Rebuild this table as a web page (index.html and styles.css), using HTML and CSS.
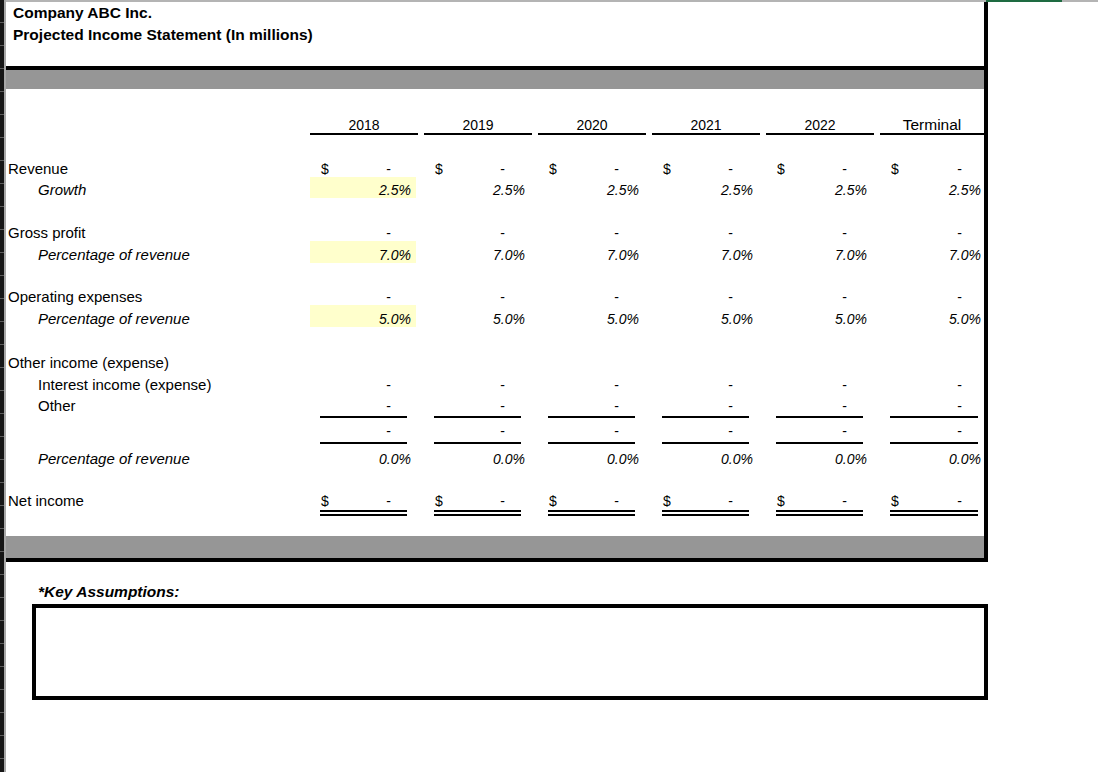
FILE: index.html
```html
<!DOCTYPE html>
<html>
<head>
<meta charset="utf-8">
<title>Projected Income Statement</title>
<link rel="stylesheet" href="styles.css">
</head>
<body>
<div class="screen">
  <div class="rowhead"></div>
  <div class="main">
    <div class="topline"><div class="tab-indicator"></div></div>
    <div class="frame">
      <div class="titles">
        <div class="title">Company ABC Inc.</div>
        <div class="title">Projected Income Statement (In millions)</div>
      </div>
      <div class="band band-top"></div>
      <div class="sheet">
        <div class="row h46 head">
          <div class="label"></div>
          <div class="yr">2018</div>
          <div class="yr">2019</div>
          <div class="yr">2020</div>
          <div class="yr">2021</div>
          <div class="yr">2022</div>
          <div class="yr last term">Terminal</div>
        </div>
        <div class="row h21"></div>
        <div class="row h21">
          <div class="label">Revenue</div>
          <div class="cell"><span class="amt"><span>$</span><span>-</span></span></div>
          <div class="cell"><span class="amt"><span>$</span><span>-</span></span></div>
          <div class="cell"><span class="amt"><span>$</span><span>-</span></span></div>
          <div class="cell"><span class="amt"><span>$</span><span>-</span></span></div>
          <div class="cell"><span class="amt"><span>$</span><span>-</span></span></div>
          <div class="cell last"><span class="amt"><span>$</span><span>-</span></span></div>
        </div>
        <div class="row h21">
          <div class="label sub it">Growth</div>
          <div class="cell pct hl">2.5%</div>
          <div class="cell pct">2.5%</div>
          <div class="cell pct">2.5%</div>
          <div class="cell pct">2.5%</div>
          <div class="cell pct">2.5%</div>
          <div class="cell pct last">2.5%</div>
        </div>
        <div class="row h22"></div>
        <div class="row h21">
          <div class="label">Gross profit</div>
          <div class="cell"><span class="amt end"><span>-</span></span></div>
          <div class="cell"><span class="amt end"><span>-</span></span></div>
          <div class="cell"><span class="amt end"><span>-</span></span></div>
          <div class="cell"><span class="amt end"><span>-</span></span></div>
          <div class="cell"><span class="amt end"><span>-</span></span></div>
          <div class="cell last"><span class="amt end"><span>-</span></span></div>
        </div>
        <div class="row h22">
          <div class="label sub it">Percentage of revenue</div>
          <div class="cell pct hl">7.0%</div>
          <div class="cell pct">7.0%</div>
          <div class="cell pct">7.0%</div>
          <div class="cell pct">7.0%</div>
          <div class="cell pct">7.0%</div>
          <div class="cell pct last">7.0%</div>
        </div>
        <div class="row h21"></div>
        <div class="row h21">
          <div class="label">Operating expenses</div>
          <div class="cell"><span class="amt end"><span>-</span></span></div>
          <div class="cell"><span class="amt end"><span>-</span></span></div>
          <div class="cell"><span class="amt end"><span>-</span></span></div>
          <div class="cell"><span class="amt end"><span>-</span></span></div>
          <div class="cell"><span class="amt end"><span>-</span></span></div>
          <div class="cell last"><span class="amt end"><span>-</span></span></div>
        </div>
        <div class="row h22">
          <div class="label sub it">Percentage of revenue</div>
          <div class="cell pct hl">5.0%</div>
          <div class="cell pct">5.0%</div>
          <div class="cell pct">5.0%</div>
          <div class="cell pct">5.0%</div>
          <div class="cell pct">5.0%</div>
          <div class="cell pct last">5.0%</div>
        </div>
        <div class="row h21"></div>
        <div class="row h23">
          <div class="label">Other income (expense)</div>
        </div>
        <div class="row h22">
          <div class="label sub">Interest income (expense)</div>
          <div class="cell"><span class="amt end"><span>-</span></span></div>
          <div class="cell"><span class="amt end"><span>-</span></span></div>
          <div class="cell"><span class="amt end"><span>-</span></span></div>
          <div class="cell"><span class="amt end"><span>-</span></span></div>
          <div class="cell"><span class="amt end"><span>-</span></span></div>
          <div class="cell last"><span class="amt end"><span>-</span></span></div>
        </div>
        <div class="row h25 single">
          <div class="label sub">Other</div>
          <div class="cell"><span class="amt end"><span>-</span></span></div>
          <div class="cell"><span class="amt end"><span>-</span></span></div>
          <div class="cell"><span class="amt end"><span>-</span></span></div>
          <div class="cell"><span class="amt end"><span>-</span></span></div>
          <div class="cell"><span class="amt end"><span>-</span></span></div>
          <div class="cell last"><span class="amt end"><span>-</span></span></div>
        </div>
        <div class="row h26 subtotal">
          <div class="label"></div>
          <div class="cell"><span class="amt end"><span>-</span></span></div>
          <div class="cell"><span class="amt end"><span>-</span></span></div>
          <div class="cell"><span class="amt end"><span>-</span></span></div>
          <div class="cell"><span class="amt end"><span>-</span></span></div>
          <div class="cell"><span class="amt end"><span>-</span></span></div>
          <div class="cell last"><span class="amt end"><span>-</span></span></div>
        </div>
        <div class="row h23">
          <div class="label sub it">Percentage of revenue</div>
          <div class="cell pct">0.0%</div>
          <div class="cell pct">0.0%</div>
          <div class="cell pct">0.0%</div>
          <div class="cell pct">0.0%</div>
          <div class="cell pct">0.0%</div>
          <div class="cell pct last">0.0%</div>
        </div>
        <div class="row h21"></div>
        <div class="row h28 net">
          <div class="label">Net income</div>
          <div class="cell"><span class="amt"><span>$</span><span>-</span></span></div>
          <div class="cell"><span class="amt"><span>$</span><span>-</span></span></div>
          <div class="cell"><span class="amt"><span>$</span><span>-</span></span></div>
          <div class="cell"><span class="amt"><span>$</span><span>-</span></span></div>
          <div class="cell"><span class="amt"><span>$</span><span>-</span></span></div>
          <div class="cell last"><span class="amt"><span>$</span><span>-</span></span></div>
        </div>
        <div class="row h20"></div>
      </div>
      <div class="band band-bottom"></div>
    </div>
    <div class="assumptions">
      <div class="assump-title">*Key Assumptions:</div>
      <div class="assump-box"></div>
    </div>
  </div>
</div>
</body>
</html>
```

FILE: styles.css
```css
* {
  box-sizing: border-box;
  margin: 0;
  padding: 0;
}

html,
body {
  margin: 0;
  background: #ffffff;
}

body {
  width: 1098px;
  height: 772px;
  overflow: hidden;
  font-family: "Liberation Sans", Arial, sans-serif;
  color: #000000;
}

.screen {
  display: flex;
  height: 772px;
}

.rowhead {
  flex: none;
  width: 6px;
  height: 772px;
  border-right: 2px solid #a8a8a8;
  background: repeating-linear-gradient(
    to bottom,
    #161616 0,
    #161616 22px,
    #5c5c5c 22px,
    #5c5c5c 23px
  );
}

.main {
  flex: 1;
  display: flex;
  flex-direction: column;
}

.topline {
  flex: none;
  height: 2px;
  background: #b4b4b4;
}

.tab-indicator {
  margin-left: 980px;
  width: 76px;
  height: 2px;
  background: #1e6b41;
}

.frame {
  width: 982px;
  border-right: 4px solid #000000;
  border-bottom: 4px solid #000000;
}

.titles {
  height: 64px;
  padding-left: 7px;
}

.title {
  font-size: 15.5px;
  font-weight: bold;
  line-height: 22px;
}

.band {
  background: #969696;
}

.band-top {
  height: 23px;
  border-top: 4px solid #000000;
}

.band-bottom {
  height: 22px;
}

.row {
  display: grid;
  grid-template-columns: 298px repeat(5, 108px) 104px;
  column-gap: 6px;
}

.row > div {
  display: flex;
  align-items: flex-end;
  line-height: 16px;
  white-space: nowrap;
}

.h20 { height: 20px; }
.h21 { height: 21px; }
.h22 { height: 22px; }
.h23 { height: 23px; }
.h25 { height: 25px; }
.h26 { height: 26px; }
.h28 { height: 28px; }
.h46 { height: 46px; }

.label {
  font-size: 15px;
  padding-left: 2px;
}

.label.sub {
  padding-left: 32px;
}

.it {
  font-style: italic;
}

.yr {
  justify-content: center;
  font-size: 14px;
  border-bottom: 2px solid #000000;
}

.yr.term {
  font-size: 15.5px;
}

.cell {
  font-size: 14px;
}

.amt {
  display: flex;
  justify-content: space-between;
  align-items: flex-end;
  margin-left: 10px;
  width: 87px;
  padding-left: 1px;
  padding-right: 16px;
}

.amt.end {
  justify-content: flex-end;
}

.last .amt {
  width: 88px;
}

.pct {
  justify-content: flex-end;
  font-style: italic;
  padding-right: 7px;
}

.pct.last {
  padding-right: 3px;
}

.hl {
  background: linear-gradient(to right, #ffffcc 0, #ffffcc 106px, transparent 106px);
}

.single .amt {
  border-bottom: 2px solid #000000;
  padding-bottom: 2px;
}

.single .label {
  padding-bottom: 4px;
}

.subtotal .amt {
  border-bottom: 2px solid #000000;
  padding-bottom: 3px;
}

.net .amt {
  border-bottom: 6px double #000000;
  padding-bottom: 1px;
}

.net .label {
  padding-bottom: 7px;
}

.assumptions {
  padding-top: 19px;
}

.assump-title {
  padding-left: 32px;
  font-size: 15.5px;
  font-weight: bold;
  font-style: italic;
  line-height: 22px;
}

.assump-box {
  margin-top: 1px;
  margin-left: 26px;
  width: 956px;
  height: 96px;
  border: 4px solid #000000;
}
```
